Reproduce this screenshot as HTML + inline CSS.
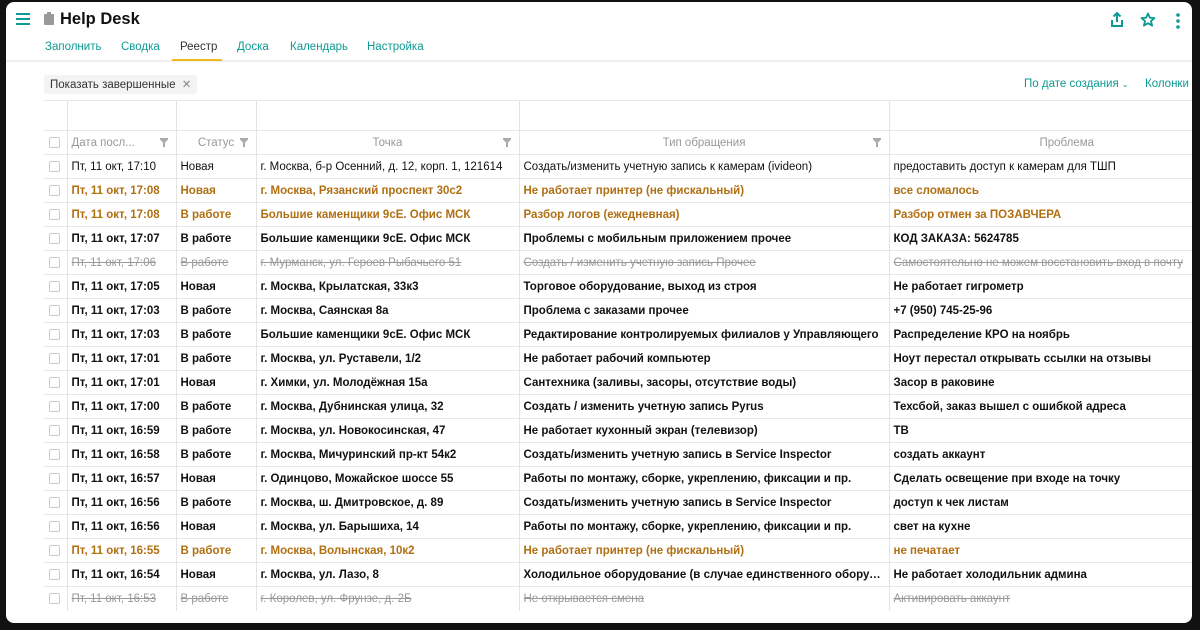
<!DOCTYPE html>
<html><head><meta charset="utf-8"><style>
*{box-sizing:border-box;margin:0;padding:0}
body{width:1200px;height:630px;background:#111;font-family:"Liberation Sans",sans-serif;position:relative;overflow:hidden}
.frame{position:absolute;left:6px;top:2px;width:1186px;height:621px;background:#fff;border-radius:8px;overflow:hidden}
.title{position:absolute;left:54px;top:8px;font-size:16.5px;font-weight:bold;color:#111}
.tabs{position:absolute;left:0;top:36px;height:24px;width:100%;border-bottom:2px solid #eee}
.tabs span{position:absolute;top:3px;font-size:11.5px;color:#0e9a94}
.tabs span.act{color:#333}
.chip{position:absolute;left:38px;top:73px;height:19px;padding:2px 6px;background:#f3f3f3;border-radius:3px;font-size:11.5px;color:#333}
.tr{position:absolute;top:76px;font-size:11.5px;color:#0e9a94}
table{position:absolute;left:38px;top:98px;border-collapse:collapse;table-layout:fixed;width:1200px;font-size:11.5px}
td{height:24px;border-top:1px solid #e8e8e8;border-left:1px solid #e3e3e3;padding:0 4px;white-space:nowrap;overflow:hidden;text-overflow:ellipsis;color:#111;font-weight:bold}
tr.h1 td{height:30px;border-top:1px solid #e8e8e8}
tr.h2 td{color:#999;font-weight:normal;height:24px;position:relative}
td:first-child{border-left:none;padding:0 0 0 5px}
.cb{display:inline-block;width:11px;height:11px;border:1px solid #ccc;border-radius:2px;vertical-align:middle}
tr.n td{font-weight:normal}
tr.o td{color:#b06f12}
tr.s td{color:#999;text-decoration:line-through;font-weight:normal}
.f{position:absolute;right:8px;top:7px;width:8px;height:9px}
</style></head><body>
<div class="frame">
<svg style="position:absolute;left:10px;top:11px" width="14" height="12"><rect y="0" width="14" height="2" fill="#0e9a94"/><rect y="5" width="14" height="2" fill="#0e9a94"/><rect y="10" width="14" height="2" fill="#0e9a94"/></svg>
<svg style="position:absolute;left:38px;top:10px" width="10" height="13"><rect x="3" y="0" width="4" height="3" fill="#999"/><rect x="0" y="2" width="10" height="11" rx="1" fill="#999"/></svg>
<div class="title">Help Desk</div>
<svg style="position:absolute;left:1104px;top:10px" width="14" height="16"><path d="M7 1v9M3.5 4.5L7 1l3.5 3.5M2 8v6h10V8" fill="none" stroke="#0e9a94" stroke-width="2"/></svg>
<svg style="position:absolute;left:1134px;top:10px" width="16" height="16"><path d="M8 1.5l1.9 4.2 4.6.4-3.5 3 1.1 4.5L8 11.2l-4.1 2.4L5 9.1 1.5 6.1l4.6-.4z" fill="none" stroke="#0e9a94" stroke-width="1.8" stroke-linejoin="round"/></svg>
<svg style="position:absolute;left:1170px;top:11px" width="4" height="16"><circle cx="2" cy="2" r="1.8" fill="#0e9a94"/><circle cx="2" cy="8" r="1.8" fill="#0e9a94"/><circle cx="2" cy="14" r="1.8" fill="#0e9a94"/></svg>
<div class="tabs">
<span style="left:39px">Заполнить</span><span style="left:115px">Сводка</span><span class="act" style="left:174px">Реестр</span><span style="left:231px">Доска</span><span style="left:284px">Календарь</span><span style="left:361px">Настройка</span>
<div style="position:absolute;left:166px;top:21px;width:50px;height:2px;background:#f2b81c"></div>
</div>
<div class="chip">Показать завершенные <span style="color:#888;margin-left:3px">✕</span></div>
<div class="tr" style="left:1018px">По дате создания <span style="font-size:8px">⌄</span></div>
<div class="tr" style="left:1139px">Колонки</div>
<table>
<colgroup><col style="width:23px"><col style="width:109px"><col style="width:80px"><col style="width:263px"><col style="width:370px"><col style="width:355px"></colgroup>
<tr class="h1"><td></td><td></td><td></td><td></td><td></td><td></td></tr>
<tr class="h2"><td><span class="cb"></span></td><td>Дата посл...<svg class="f" viewBox="0 0 8 9"><path d="M0 0h8v1.5L5 4.5V9H3V4.5L0 1.5z" fill="#aaa"/></svg></td><td style="text-align:center">Статус<svg class="f" viewBox="0 0 8 9"><path d="M0 0h8v1.5L5 4.5V9H3V4.5L0 1.5z" fill="#aaa"/></svg></td><td style="text-align:center">Точка<svg class="f" viewBox="0 0 8 9"><path d="M0 0h8v1.5L5 4.5V9H3V4.5L0 1.5z" fill="#aaa"/></svg></td><td style="text-align:center">Тип обращения<svg class="f" viewBox="0 0 8 9"><path d="M0 0h8v1.5L5 4.5V9H3V4.5L0 1.5z" fill="#aaa"/></svg></td><td style="text-align:center">Проблема</td></tr>
<tr class="n"><td><span class="cb"></span></td><td>Пт, 11 окт, 17:10</td><td>Новая</td><td>г. Москва, б-р Осенний, д. 12, корп. 1, 121614</td><td>Создать/изменить учетную запись к камерам (ivideon)</td><td>предоставить доступ к камерам для ТШП</td></tr>
<tr class="o"><td><span class="cb"></span></td><td>Пт, 11 окт, 17:08</td><td>Новая</td><td>г. Москва, Рязанский проспект 30с2</td><td>Не работает принтер (не фискальный)</td><td>все сломалось</td></tr>
<tr class="o"><td><span class="cb"></span></td><td>Пт, 11 окт, 17:08</td><td>В работе</td><td>Большие каменщики 9сЕ. Офис МСК</td><td>Разбор логов (ежедневная)</td><td>Разбор отмен за ПОЗАВЧЕРА</td></tr>
<tr><td><span class="cb"></span></td><td>Пт, 11 окт, 17:07</td><td>В работе</td><td>Большие каменщики 9сЕ. Офис МСК</td><td>Проблемы с мобильным приложением прочее</td><td>КОД ЗАКАЗА: 5624785</td></tr>
<tr class="s"><td><span class="cb"></span></td><td>Пт, 11 окт, 17:06</td><td>В работе</td><td>г. Мурманск, ул. Героев Рыбачьего 51</td><td>Создать / изменить учетную запись Прочее</td><td>Самостоятельно не можем восстановить вход в почту</td></tr>
<tr><td><span class="cb"></span></td><td>Пт, 11 окт, 17:05</td><td>Новая</td><td>г. Москва, Крылатская, 33к3</td><td>Торговое оборудование, выход из строя</td><td>Не работает гигрометр</td></tr>
<tr><td><span class="cb"></span></td><td>Пт, 11 окт, 17:03</td><td>В работе</td><td>г. Москва, Саянская 8а</td><td>Проблема с заказами прочее</td><td>+7 (950) 745-25-96</td></tr>
<tr><td><span class="cb"></span></td><td>Пт, 11 окт, 17:03</td><td>В работе</td><td>Большие каменщики 9сЕ. Офис МСК</td><td>Редактирование контролируемых филиалов у Управляющего</td><td>Распределение КРО на ноябрь</td></tr>
<tr><td><span class="cb"></span></td><td>Пт, 11 окт, 17:01</td><td>В работе</td><td>г. Москва, ул. Руставели, 1/2</td><td>Не работает рабочий компьютер</td><td>Ноут перестал открывать ссылки на отзывы</td></tr>
<tr><td><span class="cb"></span></td><td>Пт, 11 окт, 17:01</td><td>Новая</td><td>г. Химки, ул. Молодёжная 15а</td><td>Сантехника (заливы, засоры, отсутствие воды)</td><td>Засор в раковине</td></tr>
<tr><td><span class="cb"></span></td><td>Пт, 11 окт, 17:00</td><td>В работе</td><td>г. Москва, Дубнинская улица, 32</td><td>Создать / изменить учетную запись Pyrus</td><td>Техсбой, заказ вышел с ошибкой адреса</td></tr>
<tr><td><span class="cb"></span></td><td>Пт, 11 окт, 16:59</td><td>В работе</td><td>г. Москва, ул. Новокосинская, 47</td><td>Не работает кухонный экран (телевизор)</td><td>ТВ</td></tr>
<tr><td><span class="cb"></span></td><td>Пт, 11 окт, 16:58</td><td>В работе</td><td>г. Москва, Мичуринский пр-кт 54к2</td><td>Создать/изменить учетную запись в Service Inspector</td><td>создать аккаунт</td></tr>
<tr><td><span class="cb"></span></td><td>Пт, 11 окт, 16:57</td><td>Новая</td><td>г. Одинцово, Можайское шоссе 55</td><td>Работы по монтажу, сборке, укреплению, фиксации и пр.</td><td>Сделать освещение при входе на точку</td></tr>
<tr><td><span class="cb"></span></td><td>Пт, 11 окт, 16:56</td><td>В работе</td><td>г. Москва, ш. Дмитровское, д. 89</td><td>Создать/изменить учетную запись в Service Inspector</td><td>доступ к чек листам</td></tr>
<tr><td><span class="cb"></span></td><td>Пт, 11 окт, 16:56</td><td>Новая</td><td>г. Москва, ул. Барышиха, 14</td><td>Работы по монтажу, сборке, укреплению, фиксации и пр.</td><td>свет на кухне</td></tr>
<tr class="o"><td><span class="cb"></span></td><td>Пт, 11 окт, 16:55</td><td>В работе</td><td>г. Москва, Волынская, 10к2</td><td>Не работает принтер (не фискальный)</td><td>не печатает</td></tr>
<tr><td><span class="cb"></span></td><td>Пт, 11 окт, 16:54</td><td>Новая</td><td>г. Москва, ул. Лазо, 8</td><td>Холодильное оборудование (в случае единственного оборудова…</td><td>Не работает холодильник админа</td></tr>
<tr class="s"><td><span class="cb"></span></td><td>Пт, 11 окт, 16:53</td><td>В работе</td><td>г. Королев, ул. Фрунзе, д. 2Б</td><td>Не открывается смена</td><td>Активировать аккаунт</td></tr>
</table>
</div>
</body></html>
